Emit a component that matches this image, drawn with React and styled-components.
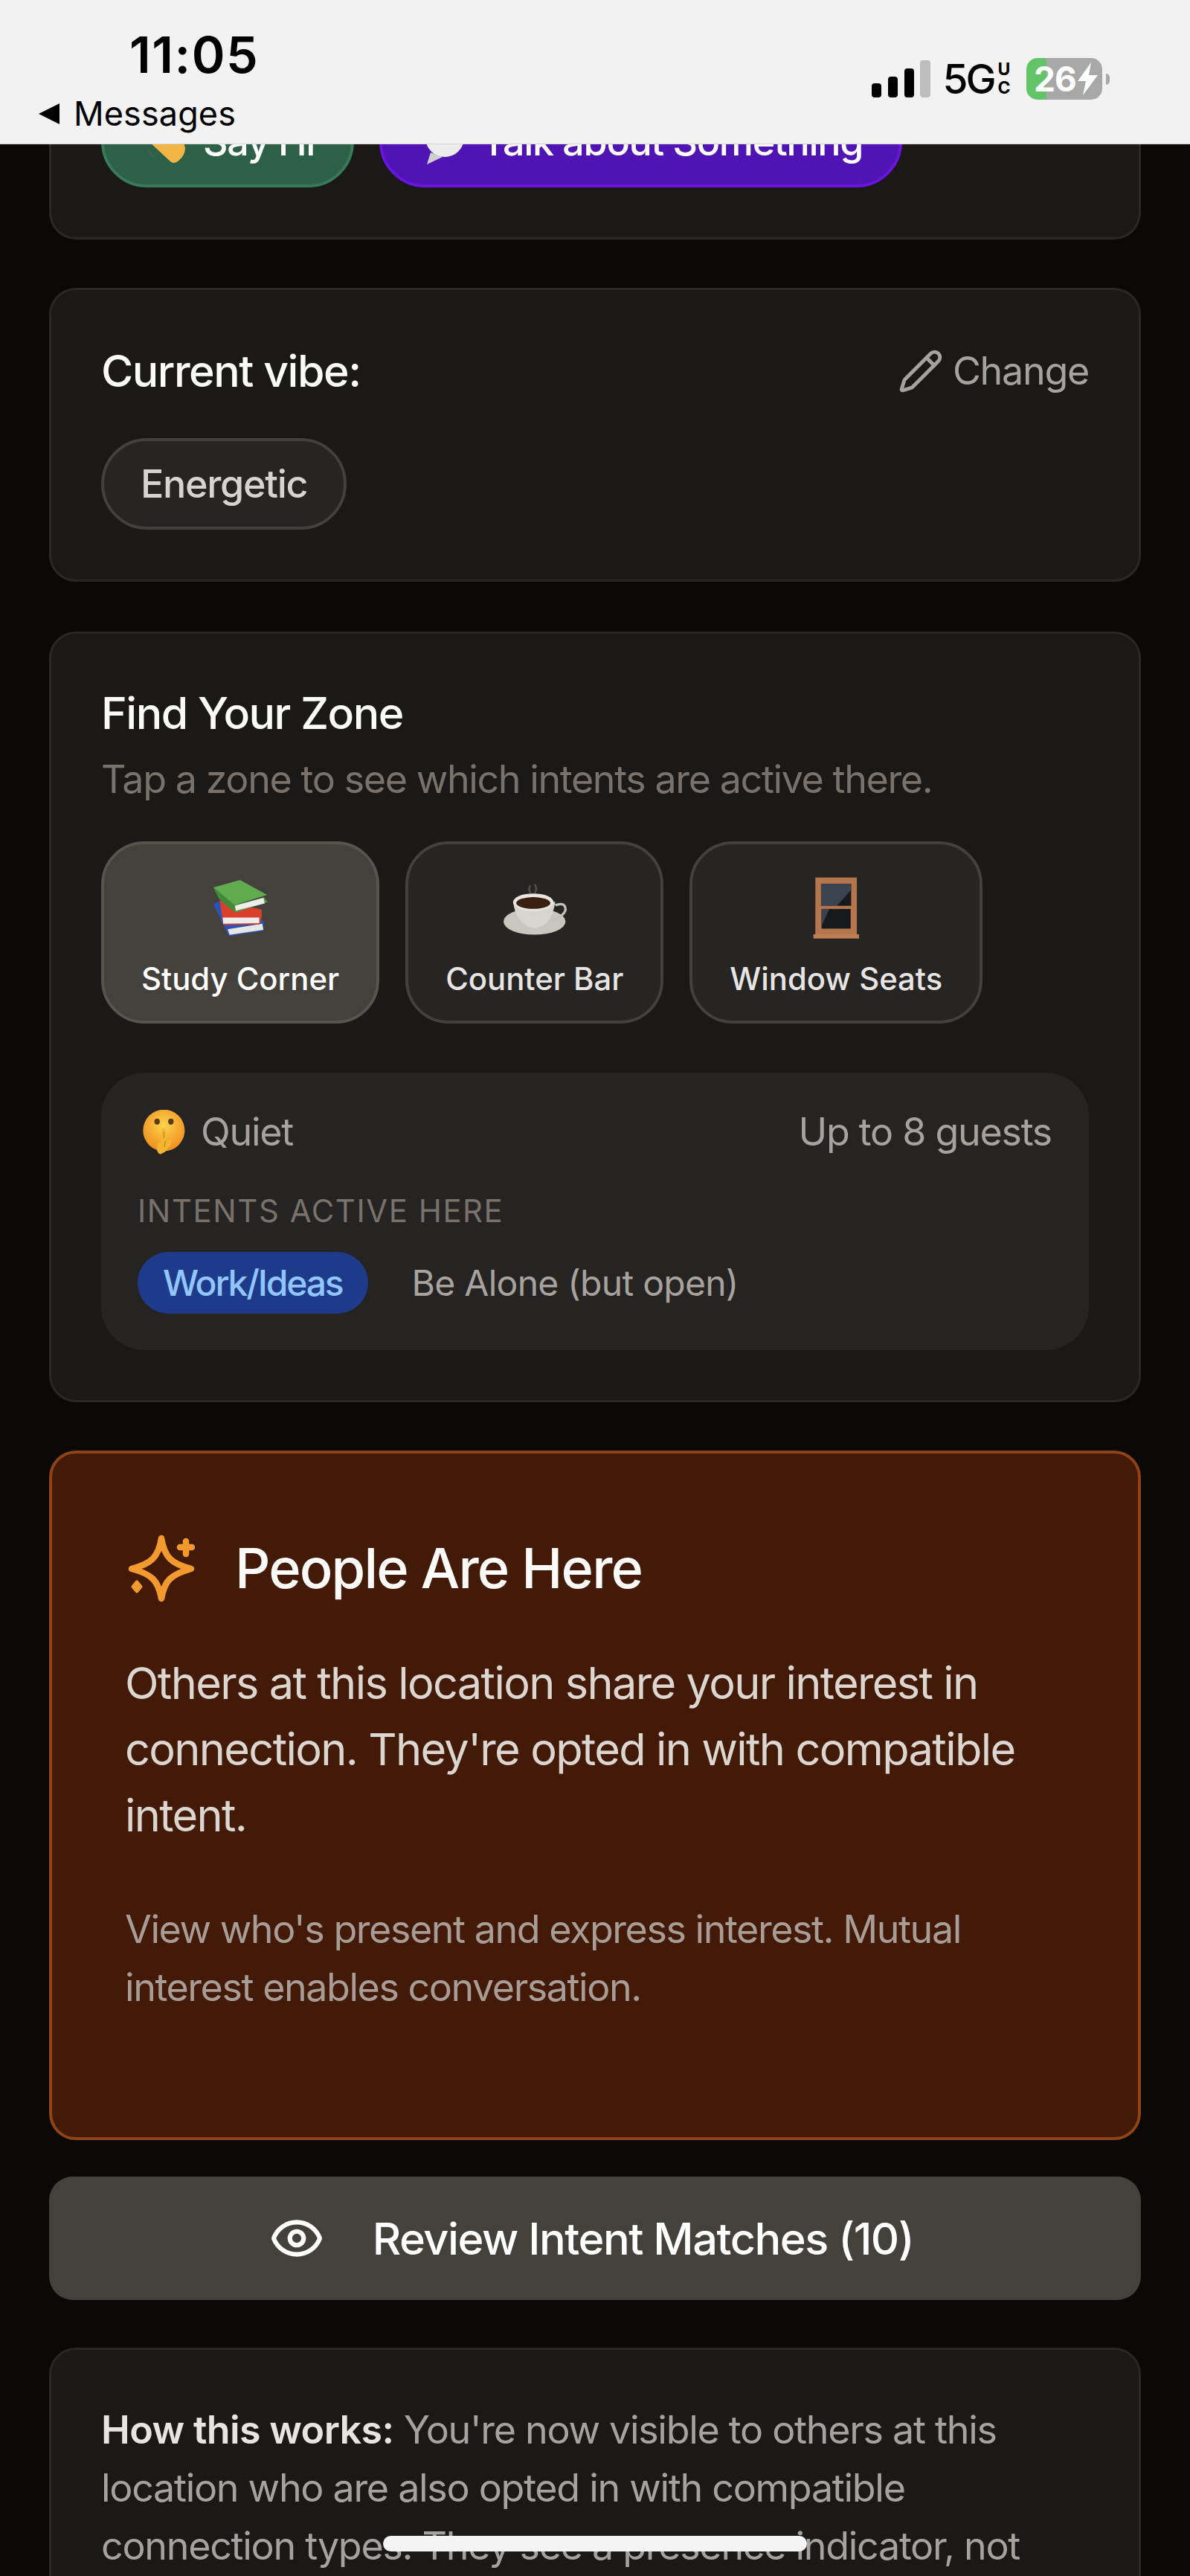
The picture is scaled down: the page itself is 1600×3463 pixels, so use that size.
import React from 'react';
import styled, { createGlobalStyle } from 'styled-components';
import { Eye, Pencil } from 'lucide-react';

const GlobalStyle = createGlobalStyle`
    html, body {
        margin: 0;
        padding: 0;
        background: #0a0908;
    }
    * {
        box-sizing: border-box;
        letter-spacing: -0.025em;
    }
`;

const Page = styled.div`
    position: relative;
    width: 1600px;
    height: 3463px;
    overflow: hidden;
    background: #0a0908;
    font-family: Inter, "Liberation Sans", sans-serif;
`;

const StatusBar = styled.div`
    position: absolute;
    top: 0;
    left: 0;
    right: 0;
    height: 194px;
    z-index: 2;
    display: flex;
    justify-content: space-between;
    background: #f2f2f2;
    border-bottom: 1px solid #d4d4d4;
    color: #000;
`;

const StatusLeft = styled.div`
    padding: 33px 0 0 52px;
`;

const Time = styled.div`
    padding-left: 122px;
    font-size: 68px;
    font-weight: 600;
    line-height: 80px;
    letter-spacing: 1.5px;
`;

const BackLink = styled.div`
    display: flex;
    align-items: center;
    gap: 19px;
    margin-top: 10px;
    font-size: 45px;
    line-height: 60px;
    letter-spacing: 0.1px;
    &::before {
        content: '';
        border-style: solid;
        border-width: 14px 28px 14px 0;
        border-color: transparent #000 transparent transparent;
    }
`;

const StatusRight = styled.div`
    display: flex;
    align-items: center;
    height: 56px;
    margin-top: 78px;
    padding-right: 108px;
`;

const Network = styled.span`
    margin-left: 16px;
    font-size: 55px;
    font-weight: 500;
    line-height: 56px;
    letter-spacing: -3px;
`;

const NetworkBand = styled.span`
    display: flex;
    flex-direction: column;
    margin-left: 5px;
    font-size: 23px;
    font-weight: 700;
    line-height: 25px;
`;

const Battery = styled.div`
    display: flex;
    align-items: center;
    width: 102px;
    height: 56px;
    margin-left: 22px;
    padding-left: 10px;
    border-radius: 15px;
    background: linear-gradient(90deg, #62c467 0 27px, #a8a8a8 27px);
    color: #fff;
    font-size: 46px;
    font-weight: 700;
    letter-spacing: -1px;
`;

const BatteryNub = styled.span`
    width: 5px;
    height: 15px;
    margin-left: 5px;
    border-radius: 0 8px 8px 0;
    background: #a8a8a8;
`;

const HomeBar = styled.div`
    position: absolute;
    left: 515px;
    top: 3409px;
    width: 570px;
    height: 21px;
    z-index: 2;
    border-radius: 11px;
    background: #f4f4f4;
`;

const Content = styled.div`
    display: flex;
    flex-direction: column;
    gap: 65px;
    padding: 0 66px;
`;

const Card = styled.div`
    padding: 69px 67px 67px;
    background: #1a1918;
    border: 3px solid #292826;
    border-radius: 36px;
`;

const GreetingCard = styled(Card)`
    height: 322px;
    padding-top: 129px;
    border-top: none;
    border-radius: 0 0 36px 36px;
`;

const GreetingRow = styled.div`
    display: flex;
    gap: 34px;
`;

const GreetingButton = styled.div`
    display: flex;
    align-items: center;
    gap: 24px;
    height: 123px;
    padding: 0 49px;
    border-radius: 62px;
    background: ${(p) => p.$bg};
    border: 4px solid ${(p) => p.$line};
    color: #fff;
    font-size: 52px;
    font-weight: 500;
`;

const VibeCard = styled(Card)`
    padding-top: 71px;
`;

const CardHeader = styled.div`
    display: flex;
    justify-content: space-between;
    align-items: center;
    margin-bottom: 52px;
`;

const CardTitle = styled.div`
    color: #fafaf9;
    font-size: 59px;
    font-weight: 500;
    line-height: 76px;
`;

const ChangeLink = styled.div`
    display: flex;
    align-items: center;
    gap: 12px;
    color: #a8a29e;
    font-size: 52px;
    line-height: 76px;
`;

const VibeChip = styled.div`
    display: inline-flex;
    align-items: center;
    height: 123px;
    padding: 0 49px;
    border-radius: 62px;
    background: #272523;
    border: 4px solid #44403c;
    color: #d6d3d1;
    font-size: 52px;
    font-weight: 500;
`;

const ZoneCard = styled(Card)`
    margin-top: 2px;
`;

const Subtitle = styled.div`
    margin: 12px 0 44px;
    color: #78716c;
    font-size: 52px;
    line-height: 78px;
    letter-spacing: -0.027em;
`;

const ZoneRow = styled.div`
    display: flex;
    gap: 35px;
    margin-bottom: 66px;
`;

const ZoneButton = styled.div`
    display: flex;
    flex-direction: column;
    align-items: center;
    height: 245px;
    padding: 42px 50px 0;
    border-radius: 58px;
    background: ${(p) => (p.$active ? '#44403c' : '#272523')};
    border: 4px solid ${(p) => (p.$active ? '#57534e' : '#44403c')};
    color: ${(p) => (p.$active ? '#fff' : '#e7e5e4')};
    font-size: 41.8px;
    font-weight: 500;
    letter-spacing: 0;
    white-space: nowrap;
`;

const ZoneIcon = styled.div`
    display: flex;
    align-items: center;
    justify-content: center;
    height: 86px;
    margin-bottom: 28px;
`;

const ZonePanel = styled.div`
    padding: 41px 50px 49px 49px;
    border-radius: 58px;
    background: #262423;
`;

const PanelRow = styled.div`
    display: flex;
    justify-content: space-between;
    align-items: center;
    color: #a8a29e;
    font-size: 52px;
    line-height: 78px;
`;

const NoiseLevel = styled.div`
    display: flex;
    align-items: center;
    gap: 21px;
    padding-left: 6px;
`;

const PanelLabel = styled.div`
    margin: 37px 0 25px;
    color: #78716c;
    font-size: 41.8px;
    line-height: 60px;
    letter-spacing: 1.6px;
`;

const IntentRow = styled.div`
    display: flex;
    gap: 25px;
`;

const IntentChip = styled.div`
    display: flex;
    align-items: center;
    height: 83px;
    padding: 0 34px;
    border-radius: 42px;
    background: ${(p) => (p.$active ? '#1e3a8a' : 'transparent')};
    color: ${(p) => (p.$active ? '#93c5fd' : '#a8a29e')};
    font-size: 48px;
    font-weight: ${(p) => (p.$active ? 500 : 400)};
    letter-spacing: ${(p) => (p.$active ? '-0.045em' : '-0.015em')};
`;

const NoticeCard = styled.div`
    height: 927px;
    padding: 109px 98px 0;
    background: #431a07;
    border: 4px solid #8f4317;
    border-radius: 36px;
`;

const NoticeHeader = styled.div`
    display: flex;
    align-items: center;
    gap: 54px;
    margin-bottom: 64px;
    padding-left: 4px;
`;

const NoticeTitle = styled.div`
    color: #fafaf9;
    font-size: 74px;
    font-weight: 500;
    line-height: 91px;
`;

const NoticeBody = styled.div`
    margin-bottom: 70px;
    color: #dcd6d1;
    font-size: 59.5px;
    line-height: 89px;
    letter-spacing: -0.028em;
`;

const NoticeSmall = styled.div`
    color: #a89d96;
    font-size: 52px;
    line-height: 78px;
    letter-spacing: -0.028em;
`;

const ReviewButton = styled.div`
    display: flex;
    align-items: center;
    justify-content: center;
    gap: 65px;
    height: 166px;
    margin-top: -16px;
    padding-right: 10px;
    border-radius: 32px;
    background: #44403c;
    color: #fff;
    font-size: 59.5px;
    font-weight: 500;
`;

const HelpCard = styled(Card)`
    margin-top: -1px;
    padding-bottom: 120px;
    color: #a8a29e;
    font-size: 52px;
    line-height: 78px;
    strong {
        color: #e7e5e4;
        font-weight: 600;
        letter-spacing: -0.012em;
    }
`;

const SignalBars = () => (
    <svg width="79" height="50" viewBox="0 0 79 50">
        <rect x="0" y="31" width="13" height="19" rx="4" fill="#000" />
        <rect x="22" y="22" width="13" height="28" rx="4" fill="#000" />
        <rect x="44" y="11" width="13" height="39" rx="4" fill="#000" />
        <rect x="65" y="0" width="14" height="50" rx="4" fill="#bdbdbd" />
    </svg>
);

const Bolt = () => (
    <svg width="30" height="44" viewBox="0 0 30 44">
        <path d="M20 0 L2 25 H13 L9 44 L29 17 H17 Z" fill="#fff" />
    </svg>
);

const WaveEmoji = () => (
    <svg width="60" height="60" viewBox="0 0 60 60">
        <path d="M12 30 L40 56 Q44 60 50 56 Q60 48 60 38 L50 0 L12 0 Z" fill="#f0b545" />
        <path d="M10 40 Q13 47 20 50" stroke="#4a5f52" strokeWidth="2" fill="none" />
    </svg>
);

const BubbleEmoji = () => (
    <svg width="60" height="60" viewBox="0 0 60 60">
        <ellipse cx="35" cy="24" rx="26" ry="26" fill="#ececec" />
        <path d="M16 44 L11 60 L32 50 Z" fill="#cfcfcf" />
    </svg>
);

const BooksEmoji = () => (
    <svg width="74" height="75" viewBox="40 38 222 226">
        <path d="M42 135 L68 122 L248 205 L242 245 L105 265 Z" fill="#2a52b8" />
        <path d="M100 238 L240 215 L245 240 L108 260 Z" fill="#e6e6e6" />
        <path d="M68 120 L238 158 L238 188 L230 218 L82 220 Z" fill="#d8402c" />
        <path d="M80 190 L228 190 L228 213 L82 215 Z" fill="#ececec" />
        <path d="M42 68 L128 140 L130 170 L65 115 Z" fill="#3f8a3a" />
        <path d="M128 140 L248 108 L262 128 L130 170 Z" fill="#4c9a42" />
        <path d="M130 142 L245 110 L250 133 L133 162 Z" fill="#eeeeee" />
        <path d="M42 68 L150 38 L260 98 L128 140 Z" fill="#5fab4e" />
    </svg>
);

const CoffeeEmoji = () => (
    <svg width="86" height="73" viewBox="35 38 262 222">
        <path d="M150 90 Q135 70 150 58 M165 90 Q180 70 165 52" stroke="#55524e" strokeWidth="7" fill="none" />
        <ellipse cx="165" cy="205" rx="127" ry="54" fill="#c9c6bf" />
        <path d="M250 138 Q292 122 292 158 Q286 182 238 202" stroke="#c4c1ba" strokeWidth="10" fill="none" />
        <path d="M78 122 Q85 215 165 233 Q235 225 250 125 Z" fill="#d8d5ce" />
        <ellipse cx="160" cy="126" rx="83" ry="36" fill="#e9e6e0" />
        <ellipse cx="160" cy="129" rx="70" ry="24" fill="#3a2013" />
    </svg>
);

const WindowEmoji = () => (
    <svg width="62" height="83" viewBox="56 33 185 250">
        <rect x="65" y="35" width="168" height="235" fill="#b5764e" />
        <rect x="57" y="265" width="185" height="17" fill="#c07e54" />
        <rect x="88" y="60" width="122" height="90" fill="#17191d" />
        <path d="M88 60 H210 V85 L152 150 H88 Z" fill="#3c4350" />
        <rect x="90" y="162" width="118" height="80" fill="#17191d" />
        <path d="M90 162 H122 L90 232 Z" fill="#3c4350" />
        <rect x="78" y="150" width="142" height="11" fill="#b5764e" />
    </svg>
);

const ShushEmoji = () => (
    <svg width="58" height="60" viewBox="60 38 172 178">
        <defs>
            <radialGradient id="shush-face" cx="50%" cy="38%" r="62%">
                <stop offset="0%" stopColor="#fbd34d" />
                <stop offset="100%" stopColor="#ef8f1f" />
            </radialGradient>
        </defs>
        <circle cx="147" cy="120" r="83" fill="url(#shush-face)" />
        <ellipse cx="120" cy="85" rx="11" ry="12" fill="#5b3a1a" />
        <ellipse cx="175" cy="85" rx="11" ry="12" fill="#5b3a1a" />
        <path d="M140 116 Q147 106 153 116 L156 160 Q178 150 178 164 Q166 206 132 215 Q112 206 124 172 L138 160 Z" fill="#f2b632" />
        <path d="M147 126 V150 M156 162 Q148 172 150 186" stroke="#b9781a" strokeWidth="3" fill="none" />
    </svg>
);

const SparkleIcon = () => (
    <svg width="90" height="91" viewBox="0 0 90 91" fill="none" stroke="#f29a2e" strokeWidth="8.5" strokeLinejoin="round" strokeLinecap="round">
        <path d="M45 5 C49 30 58 39 85 46 C58 53 49 62 45 86 C41 62 32 53 5 46 C32 39 41 30 45 5 Z" />
        <path d="M78 9 V26 M70 17 H86" />
        <path d="M12 64 L17 70 L12 76 L7 70 Z" fill="#f29a2e" strokeWidth="5" />
    </svg>
);

const zones = [
    { name: 'Study Corner', icon: <BooksEmoji />, active: true },
    { name: 'Counter Bar', icon: <CoffeeEmoji /> },
    { name: 'Window Seats', icon: <WindowEmoji /> },
];

const App = () => {
    return (
        <Page>
            <GlobalStyle />
            <StatusBar>
                <StatusLeft>
                    <Time>11:05</Time>
                    <BackLink>Messages</BackLink>
                </StatusLeft>
                <StatusRight>
                    <SignalBars />
                    <Network>5G</Network>
                    <NetworkBand><span>U</span><span>C</span></NetworkBand>
                    <Battery>26<Bolt /></Battery>
                    <BatteryNub />
                </StatusRight>
            </StatusBar>

            <Content>
                <GreetingCard>
                    <GreetingRow>
                        <GreetingButton $bg="#2c6148" $line="#37795a">
                            <WaveEmoji />Say Hi
                        </GreetingButton>
                        <GreetingButton $bg="#5014b4" $line="#6a14e0">
                            <BubbleEmoji />Talk about Something
                        </GreetingButton>
                    </GreetingRow>
                </GreetingCard>

                <VibeCard>
                    <CardHeader>
                        <CardTitle>Current vibe:</CardTitle>
                        <ChangeLink><Pencil size={62} strokeWidth={1.9} />Change</ChangeLink>
                    </CardHeader>
                    <VibeChip>Energetic</VibeChip>
                </VibeCard>

                <ZoneCard>
                    <CardTitle>Find Your Zone</CardTitle>
                    <Subtitle>Tap a zone to see which intents are active there.</Subtitle>
                    <ZoneRow>
                        {zones.map((zone) => (
                            <ZoneButton key={zone.name} $active={zone.active}>
                                <ZoneIcon>{zone.icon}</ZoneIcon>
                                {zone.name}
                            </ZoneButton>
                        ))}
                    </ZoneRow>
                    <ZonePanel>
                        <PanelRow>
                            <NoiseLevel><ShushEmoji />Quiet</NoiseLevel>
                            <span>Up to 8 guests</span>
                        </PanelRow>
                        <PanelLabel>INTENTS ACTIVE HERE</PanelLabel>
                        <IntentRow>
                            <IntentChip $active>Work/Ideas</IntentChip>
                            <IntentChip>Be Alone (but open)</IntentChip>
                        </IntentRow>
                    </ZonePanel>
                </ZoneCard>

                <NoticeCard>
                    <NoticeHeader>
                        <SparkleIcon />
                        <NoticeTitle>People Are Here</NoticeTitle>
                    </NoticeHeader>
                    <NoticeBody>
                        Others at this location share your interest in connection. They're opted in with compatible intent.
                    </NoticeBody>
                    <NoticeSmall>
                        View who's present and express interest. Mutual interest enables conversation.
                    </NoticeSmall>
                </NoticeCard>

                <ReviewButton>
                    <Eye size={74} strokeWidth={2} />
                    Review Intent Matches (10)
                </ReviewButton>

                <HelpCard>
                    <strong>How this works:</strong> You're now visible to others at this location who are also opted in with compatible connection types. They see a presence indicator, not
                </HelpCard>
            </Content>
            <HomeBar />
        </Page>
    );
};

export default App;
